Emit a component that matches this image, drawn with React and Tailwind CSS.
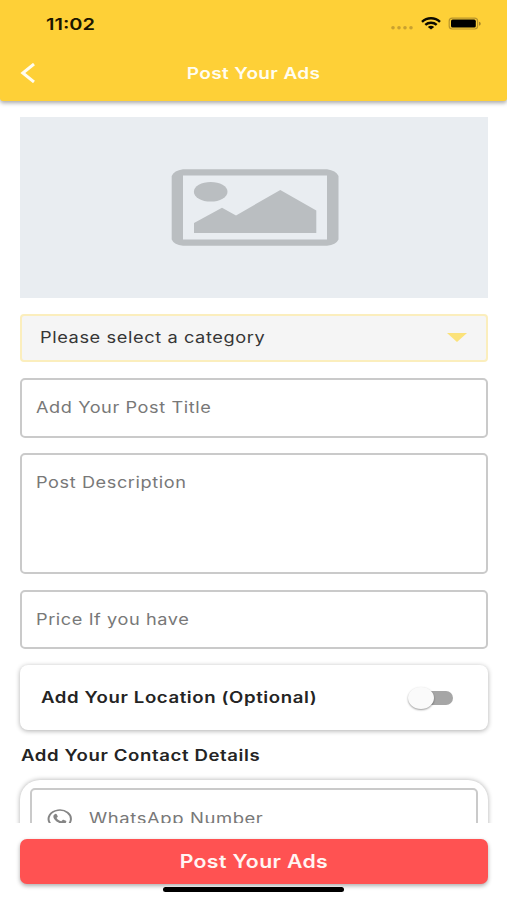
import React from "react";

function Label({ className = "", children }) {
  return (
    <span className={`block w-max whitespace-nowrap leading-5 ${className}`}>{children}</span>
  );
}

function StatusBar() {
  return (
    <div className="flex h-[47px] items-center justify-between pl-[46px] pr-[26px]">
      <Label className="origin-left scale-x-[1.25] text-[16px] font-semibold text-[#1c1600]">11:02</Label>
      <svg className="h-5 w-[91px]" viewBox="390 14 91 20">
        <g fill="#c9a12f">
          <circle cx="393" cy="27.7" r="1.8" />
          <circle cx="399" cy="27.7" r="1.8" />
          <circle cx="405" cy="27.7" r="1.8" />
          <circle cx="411" cy="27.7" r="1.8" />
        </g>
        <g fill="none" stroke="#0d0b00" strokeWidth="2.4">
          <path d="M422 21.8C427 17 435 17 440 21.8" />
          <path d="M425.3 24.9C428.5 22 433.5 22 436.7 24.9" />
        </g>
        <path d="M427.8 27C429.6 25.4 432.4 25.4 434.2 27L431 29.4Z" fill="#0d0b00" />
        <rect x="449.2" y="18.2" width="28.4" height="10.8" rx="3" fill="none" stroke="#b8942c" strokeWidth="1.2" />
        <rect x="451" y="19.6" width="24.8" height="8" rx="1.6" fill="#000" />
        <path d="M479 21.7C481.3 22.3 481.3 25 479 25.6Z" fill="#a98524" />
      </svg>
    </div>
  );
}

function Header() {
  return (
    <header className="relative z-10 h-[101px] shrink-0 rounded-b-[3px] bg-[#fed037] shadow-[0_2px_4px_rgba(0,0,0,0.35)]">
      <StatusBar />
      <div className="grid h-[52px] grid-cols-[1fr_auto_1fr] items-center pl-[20px] pr-[20px]">
        <svg className="h-5 w-4" viewBox="0 0 16 20" fill="none" stroke="#fffdf0" strokeWidth="3">
          <path d="M14 1L2.800 10L14 19" />
        </svg>
        <Label className="translate-x-[0.5px] scale-x-[1.19] text-[16px] font-semibold tracking-[0.3px] text-[#fffdf0]">Post Your Ads</Label>
      </div>
    </header>
  );
}

function Field({ className = "", children }) {
  return (
    <div className={`w-[468px] shrink-0 rounded-[5px] border-2 border-[#cacaca] pl-[13.5px] pt-[18px] ${className}`}>
      <Label className="origin-left scale-x-[1.17] text-[15.5px] tracking-[0.5px] text-[#787878]">{children}</Label>
    </div>
  );
}

export default function App() {
  return (
    <div className="flex h-[900px] w-[507px] flex-col overflow-hidden bg-white font-['Inter',sans-serif]">
      <Header />
      <main className="flex h-[722px] shrink-0 flex-col overflow-hidden px-5 pt-4">
        <div className="flex h-[181px] w-[468px] shrink-0 items-center justify-center bg-[#e9edf1] pl-[2px]">
          <svg className="h-[77px] w-[168px]" viewBox="171 169.500 168 77" fill="#babec1">
            <path fillRule="evenodd" d="M183 169.700H327Q336 171 338.500 176.500V240Q336 245.500 327 246.300H183Q174 245.500 171.700 240V176.500Q174 171 183 169.700ZM183 176V240H327V176Z" />
            <ellipse cx="210.700" cy="192.200" rx="16.800" ry="9.800" />
            <path d="M194 233.400V223.600L222 208.200L236 216L280.300 190.400L316.300 211V233.400Z" />
          </svg>
        </div>
        <div className="mt-4 flex h-[48px] w-[468px] shrink-0 items-center justify-between rounded-[4px] border-2 border-[#fbeebd] bg-[#f5f5f5] pb-px pl-[18px] pr-[19px]">
          <Label className="origin-left scale-x-[1.175] text-[15.5px] tracking-[0.5px] text-[#363636]">Please select a category</Label>
          <svg className="h-[9px] w-[20px]" viewBox="0 0 20 9"><path d="M0 0H20L10 9Z" fill="#fbe27a" /></svg>
        </div>
        <Field className="mt-4 h-[60px]">Add Your Post Title</Field>
        <Field className="mt-[15px] h-[121px]">Post Description</Field>
        <Field className="mt-4 h-[59px]">Price If you have</Field>
        <section className="mt-4 flex h-[65px] w-[468px] shrink-0 items-center justify-between rounded-[8px] bg-white pl-[20.5px] pr-[35.5px] shadow-[0_1px_5px_rgba(0,0,0,0.32)]">
          <Label className="origin-left scale-x-[1.2] text-[15.5px] font-semibold tracking-[0.5px] text-[#242424]">Add Your Location (Optional)</Label>
          <div className="flex h-[14px] w-[42px] items-center rounded-[7px] bg-[#a6a6a6]">
            <div className="-ml-[3px] h-[22px] w-[26px] shrink-0 rounded-[50%] bg-[#fafafa] shadow-[0_1px_2px_rgba(0,0,0,0.4)]" />
          </div>
        </section>
        <h2 className="mt-[16px] pl-px">
          <Label className="origin-left scale-x-[1.2] text-[15.5px] font-semibold tracking-[0.5px] text-[#242424]">Add Your Contact Details</Label>
        </h2>
        <section className="mt-[14px] h-[140px] w-[468px] shrink-0 rounded-t-[20px] bg-white px-[10px] pt-[8px] shadow-[0_0_5px_rgba(0,0,0,0.32)]">
          <div className="flex h-[61px] items-center rounded-[5px] border-2 border-[#cacaca] pl-[15px]">
            <svg className="h-[20px] w-[25px]" viewBox="0 0 24 24" preserveAspectRatio="none" fill="none" stroke="#858585" strokeWidth="1.9">
              <path d="M1.200 22.800L2.900 17.200A10.700 10.700 0 1 1 7 21.300Z" />
              <path fill="#858585" stroke="none" d="M7.100 6.500C8 5.500 9 5.700 9.400 6.600L10.300 8.800C10.500 9.500 9.600 10.200 9.200 10.700C10.200 12.700 11.700 14 13.700 14.800L15 13.300C15.400 12.900 15.800 13 16.300 13.200L18.200 14.200C19 14.700 18.400 16.800 17.200 17.400C12.500 19.600 4.500 12.200 6.400 7.600Z" />
            </svg>
            <Label className="ml-[17px] origin-left scale-x-[1.19] text-[15.5px] tracking-[0.5px] text-[#787878]">WhatsApp Number</Label>
          </div>
        </section>
      </main>
      <footer className="relative h-[77px] shrink-0 bg-white px-5 pt-4">
        <button className="flex h-[45px] w-[468px] items-center justify-center rounded-[7px] bg-[#ff5252] shadow-[0_2px_4px_rgba(0,0,0,0.32)]">
          <Label className="scale-x-[1.18] text-[18px] font-semibold tracking-[0.3px] text-[#fff5f3]">Post Your Ads</Label>
        </button>
        <div className="absolute left-[163px] top-[64px] h-[5px] w-[181px] rounded-full bg-black" />
      </footer>
    </div>
  );
}
